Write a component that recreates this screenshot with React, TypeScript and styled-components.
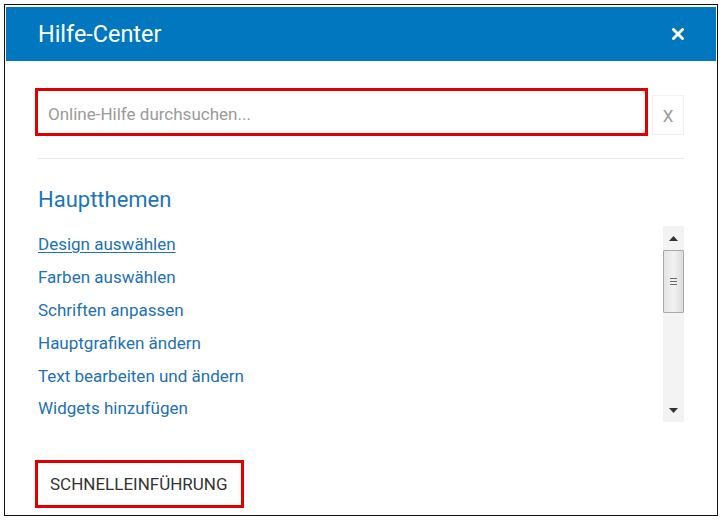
import React from "react";
import styled, { createGlobalStyle } from "styled-components";

const GlobalStyle = createGlobalStyle`
  html, body { margin: 0; padding: 0; background: #fff; }
  body { font-family: Roboto, "Liberation Sans", Arial, sans-serif; }
  * { box-sizing: border-box; }
`;

const Frame = styled.div`
  margin: 4px 0 0 4px;
  width: 714px;
  height: 512px;
  border: 1px solid #111;
  padding: 2px 1px 0 1px;
  background: #fff;
`;

const Dialog = styled.div`
  display: flex;
  flex-direction: column;
  width: 710px;
`;

const Header = styled.div`
  height: 54px;
  background: #0077bf;
  display: flex;
  align-items: center;
  justify-content: space-between;
  padding: 0 32px;
`;

const Title = styled.h1`
  margin: 0;
  font-size: 23.4px;
  font-weight: 400;
  color: #fff;
  line-height: 28px;
`;

const CloseButton = styled.button`
  border: 0;
  background: transparent;
  padding: 0;
  width: 12px;
  height: 12px;
  display: flex;
  align-items: center;
  justify-content: center;
  cursor: pointer;
`;

const Body = styled.div`
  display: flex;
  flex-direction: column;
  align-items: flex-start;
  padding: 0 32px;
`;

const SearchRow = styled.div`
  margin-top: 27px;
  display: flex;
  align-items: flex-end;
  width: 100%;
`;

const SearchField = styled.input`
  margin-left: -3px;
  width: 613px;
  height: 48px;
  border: 3px solid #e00000;
  padding: 4px 0 0 10px;
  font-family: Roboto, "Liberation Sans", Arial, sans-serif;
  font-size: 17px;
  color: #333;
  outline: none;
  background: #fff;
  &::placeholder {
    color: #9a9a9a;
  }
`;

const ClearButton = styled.button`
  margin-left: 4px;
  margin-bottom: 1px;
  width: 32px;
  height: 40px;
  border: 1px solid #f0f0f0;
  background: #fff;
  color: #9a9a9a;
  font-family: Roboto, "Liberation Sans", Arial, sans-serif;
  font-size: 17px;
  padding: 2px 0 0;
`;

const Divider = styled.hr`
  margin: 22px 0 0;
  width: 100%;
  border: 0;
  height: 1px;
  background: #e8e8e8;
`;

const Heading = styled.h2`
  margin: 28px 0 0;
  font-size: 22px;
  line-height: 26px;
  font-weight: 400;
  color: #1e74ba;
`;

const TopicsArea = styled.div`
  margin-top: 13px;
  width: 100%;
  height: 196px;
  display: flex;
  overflow: hidden;
`;

const LinkList = styled.ul`
  flex: 1;
  list-style: none;
  margin: 0;
  padding: 2px 0 0;
`;

const LinkItem = styled.li`
  height: 32.8px;
  display: flex;
  align-items: center;
`;

const TopicLink = styled.a<{ $active?: boolean }>`
  font-size: 17px;
  color: #2271b3;
  text-decoration: ${(p) => (p.$active ? "underline" : "none")};
  text-underline-offset: 2px;
  cursor: pointer;
`;

const Scrollbar = styled.div`
  width: 21px;
  height: 196px;
  background: #f3f3f3;
  display: flex;
  flex-direction: column;
`;

const ArrowButton = styled.div`
  height: 24px;
  display: flex;
  align-items: center;
  justify-content: center;
`;

const Thumb = styled.div`
  height: 63px;
  border: 1px solid #a9a9a9;
  border-radius: 1px;
  background: linear-gradient(to right, #e4e4e4, #f2f2f2 50%, #dcdcdc);
  display: flex;
  flex-direction: column;
  align-items: center;
  justify-content: center;
  gap: 2px;
`;

const Grip = styled.span`
  width: 7px;
  height: 1px;
  background: #6b6b6b;
`;

const Track = styled.div`
  flex: 1;
`;

const TourButton = styled.button`
  margin: 38px 0 0 -3px;
  width: 209px;
  height: 48px;
  border: 3px solid #e00000;
  background: #fff;
  text-align: left;
  padding: 0 0 0 12px;
  font-family: Roboto, "Liberation Sans", Arial, sans-serif;
  font-size: 17px;
  color: #333;
  text-transform: uppercase;
`;

const topics = [
  "Design auswählen",
  "Farben auswählen",
  "Schriften anpassen",
  "Hauptgrafiken ändern",
  "Text bearbeiten und ändern",
  "Widgets hinzufügen",
];

export default function App() {
  return (
    <>
      <GlobalStyle />
      <Frame>
        <Dialog>
          <Header>
            <Title>Hilfe-Center</Title>
            <CloseButton aria-label="Schließen">
              <svg width="12" height="12" viewBox="0 0 12 12">
                <path d="M1.5 1.5 L10.5 10.5 M10.5 1.5 L1.5 10.5" stroke="#fff" strokeWidth="2.8" strokeLinecap="square" />
              </svg>
            </CloseButton>
          </Header>
          <Body>
            <SearchRow>
              <SearchField placeholder="Online-Hilfe durchsuchen..." />
              <ClearButton>X</ClearButton>
            </SearchRow>
            <Divider />
            <Heading>Hauptthemen</Heading>
            <TopicsArea>
              <LinkList>
                {topics.map((t, i) => (
                  <LinkItem key={t}>
                    <TopicLink $active={i === 0}>{t}</TopicLink>
                  </LinkItem>
                ))}
              </LinkList>
              <Scrollbar>
                <ArrowButton>
                  <svg width="9" height="5" viewBox="0 0 9 5">
                    <path d="M0 5 L4.5 0 L9 5 Z" fill="#333" />
                  </svg>
                </ArrowButton>
                <Thumb>
                  <Grip />
                  <Grip />
                  <Grip />
                </Thumb>
                <Track />
                <ArrowButton>
                  <svg width="9" height="5" viewBox="0 0 9 5">
                    <path d="M0 0 L9 0 L4.5 5 Z" fill="#333" />
                  </svg>
                </ArrowButton>
              </Scrollbar>
            </TopicsArea>
            <TourButton>Schnelleinführung</TourButton>
          </Body>
        </Dialog>
      </Frame>
    </>
  );
}
